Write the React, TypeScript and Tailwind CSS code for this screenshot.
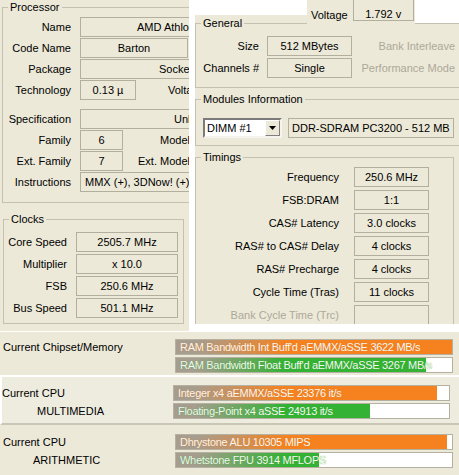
import type { ReactNode } from 'react'

const Group = ({ title, className = '', children }: { title: string; className?: string; children: ReactNode }) => (
  <fieldset className={`min-w-0 border border-[#c4c1b1] ${className}`}>
    <legend className="ml-[5px] px-[2px] leading-[13px]">{title}</legend>
    {children}
  </fieldset>
)

const Field = ({ className = '', children }: { className?: string; children?: ReactNode }) => (
  <div className={`h-[20px] shrink-0 border border-[#b2af9f] flex items-center whitespace-nowrap overflow-hidden ${className}`}>
    {children}
  </div>
)

const Row = ({ label, lw, dim = false, children }: { label: string; lw: string; dim?: boolean; children?: ReactNode }) => (
  <div className="flex items-center h-[20px] whitespace-nowrap">
    <span className={`${lw} shrink-0 text-right ${dim ? 'text-[#aca899]' : ''}`}>{label}</span>
    {children}
  </div>
)

const clocks = [
  ['Core Speed', '2505.7 MHz'],
  ['Multiplier', 'x 10.0'],
  ['FSB', '250.6 MHz'],
  ['Bus Speed', '501.1 MHz'],
]

const timings: [string, string, boolean][] = [
  ['Frequency', '250.6 MHz', false],
  ['FSB:DRAM', '1:1', false],
  ['CAS# Latency', '3.0 clocks', false],
  ['RAS# to CAS# Delay', '4 clocks', false],
  ['RAS# Precharge', '4 clocks', false],
  ['Cycle Time (Tras)', '11 clocks', false],
  ['Bank Cycle Time (Trc)', '', true],
]

const orange = 'bg-[linear-gradient(90deg,#a69d8f_20px,#f5821f_110px)]'
const green = 'bg-[linear-gradient(90deg,#a69d8f_20px,#33b233_110px)]'

const Bar = ({ text, fill, kind }: { text: string; fill: number; kind: 'orange' | 'green' }) => (
  <div className="relative h-[16px] border border-[#b4b1a3] bg-white overflow-hidden">
    <div className={`h-full ${kind === 'orange' ? orange : green}`} style={{ width: fill }} />
    <span
      className={`absolute left-[4px] top-0 leading-[14px] tracking-[-0.3px] whitespace-nowrap text-[#f6f6f2] ${
        kind === 'green' ? '[text-shadow:0_0_1px_#2ea82e]' : '[text-shadow:0_0_1px_#e07a20]'
      }`}
    >
      {text}
    </span>
  </div>
)

export default function App() {
  return (
    <div className="w-[459px] h-[475px] overflow-hidden bg-white text-[11px] text-black font-['Liberation_Sans',Arial,sans-serif]">
      {/* CPU-Z windows */}
      <div className="flex items-start h-[331px]">
        {/* CPU tab */}
        <div className="w-[189px] h-[331px] shrink-0 bg-[#ece9d8] overflow-hidden pl-[2px] pt-[1px]">
          <Group title="Processor" className="w-[300px] pt-[3px] pb-[10px]">
            <div className="flex flex-col gap-[1px]">
              <Row label="Name" lw="w-[68px]">
                <Field className="ml-[9px] w-[220px] pl-[56px]">AMD Athlon(tm) XP 3200+</Field>
              </Row>
              <Row label="Code Name" lw="w-[68px]">
                <Field className="ml-[9px] w-[108px] justify-center">Barton</Field>
              </Row>
              <Row label="Package" lw="w-[68px]">
                <Field className="ml-[9px] w-[220px] pl-[78px]">Socket A (462)</Field>
              </Row>
              <Row label="Technology" lw="w-[68px]">
                <Field className="ml-[9px] w-[56px] justify-center">0.13 µ</Field>
                <span className="ml-[32px]">Voltage</span>
              </Row>
              <div className="h-[7px]" />
              <Row label="Specification" lw="w-[68px]">
                <Field className="ml-[9px] w-[220px] pl-[93px]">Unknown</Field>
              </Row>
              <Row label="Family" lw="w-[68px]">
                <Field className="ml-[9px] w-[43px] justify-center">6</Field>
                <span className="ml-[37px]">Model</span>
              </Row>
              <Row label="Ext. Family" lw="w-[68px]">
                <Field className="ml-[9px] w-[43px] justify-center">7</Field>
                <span className="ml-[15px]">Ext. Model</span>
              </Row>
              <Row label="Instructions" lw="w-[68px]">
                <Field className="ml-[9px] w-[220px] pl-[4px]">MMX (+), 3DNow! (+), SSE</Field>
              </Row>
            </div>
          </Group>

          <Group title="Clocks" className="mt-[10px] ml-[1px] w-[181px] pt-[6px] pb-[5px]">
            <div className="flex flex-col gap-[2px]">
              {clocks.map(([l, v]) => (
                <Row key={l} label={l} lw="w-[63px]">
                  <Field className="ml-[9px] w-[102px] justify-center">{v}</Field>
                </Row>
              ))}
            </div>
          </Group>
        </div>

        {/* Memory tab */}
        <div className="relative ml-[6px] w-[264px] h-[324px] shrink-0 bg-[#ece9d8] overflow-hidden">
          <div className="flex h-[24px]">
            <div className="w-[112px] h-[15px] bg-white" />
            <div className="relative z-10 w-[108px] h-[24px] bg-[#ece9d8] flex items-start pl-[4px] whitespace-nowrap">
              <span className="pt-[9px] leading-[13px]">Voltage</span>
              <div className="ml-[5px] w-[61px] h-[21px] border border-t-0 border-[#b2af9f] flex justify-center pt-[8px] leading-[13px]">
                1.792 v
              </div>
            </div>
            <div className="flex-1 h-[23px] bg-white" />
          </div>

          <Group title="General" className="-mt-[7px] w-[300px] pt-[6px] pb-[9px]">
            <div className="flex flex-col gap-[2px]">
              <Row label="Size" lw="w-[63px]">
                <Field className="ml-[8px] w-[85px] justify-center">512 MBytes</Field>
                <span className="w-[103px] text-right text-[#aca899]">Bank Interleave</span>
              </Row>
              <Row label="Channels #" lw="w-[63px]">
                <Field className="ml-[8px] w-[85px] justify-center">Single</Field>
                <span className="w-[103px] text-right text-[#aca899]">Performance Mode</span>
              </Row>
            </div>
          </Group>

          <Group title="Modules Information" className="mt-[5px] w-[300px] pt-[12px] pb-[7px]">
            <div className="flex items-center">
              <div className="ml-[7px] w-[79px] h-[20px] flex border-2 border-t-[#7b7b7b] border-l-[#7b7b7b] border-b-[#f4f3ee] border-r-[#f4f3ee] bg-white">
                <span className="flex-1 pl-[2px] leading-[16px]">DIMM #1</span>
                <span className="w-[15px] h-full bg-[#ece9d8] border border-t-white border-l-white border-b-[#808080] border-r-[#808080] flex items-center justify-center">
                  <svg width="7" height="4" viewBox="0 0 7 4">
                    <path d="M0 0h7L3.5 4z" fill="#000" />
                  </svg>
                </span>
              </div>
              <Field className="ml-[6px] w-[166px] pl-[3px]">DDR-SDRAM PC3200 - 512 MB</Field>
            </div>
          </Group>

          <Group title="Timings" className="mt-[5px] w-[259px] pt-[3px] pb-[10px]">
            <div className="flex flex-col gap-[3px]">
              {timings.map(([l, v, dim]) => (
                <Row key={l} label={l} lw="w-[143px]" dim={dim}>
                  <Field className="ml-[15px] w-[75px] justify-center">{v}</Field>
                </Row>
              ))}
            </div>
          </Group>
        </div>
      </div>

      {/* Sandra benchmark bars */}
      <div className="mt-[1px] h-[43px] bg-[#ece9d8] flex pt-[7px]">
        <div className="w-[175px] pl-[3px] leading-[16px]">Current Chipset/Memory</div>
        <div className="w-[278px] flex flex-col gap-[2px]">
          <Bar text="RAM Bandwidth Int Buff'd aEMMX/aSSE 3622 MB/s" fill={277} kind="orange" />
          <Bar text="RAM Bandwidth Float Buff'd aEMMX/aSSE 3267 MB/s" fill={250} kind="green" />
        </div>
      </div>

      <div className="h-[50px] bg-[#eeecdf] border-t-2 border-l-2 border-t-white border-l-white border-b-2 border-b-[#c9c6b6] flex pt-[8px]">
        <div className="w-[171px] flex flex-col gap-[2px] leading-[16px]">
          <span>Current CPU</span>
          <span className="pl-[35px]">MULTIMEDIA</span>
        </div>
        <div className="w-[277px] flex flex-col gap-[2px]">
          <Bar text="Integer x4 aEMMX/aSSE 23376 it/s" fill={263} kind="orange" />
          <Bar text="Floating-Point x4 aSSE 24913 it/s" fill={196} kind="green" />
        </div>
      </div>

      <div className="h-[50px] bg-[#ece9d8] flex pt-[9px]">
        <div className="w-[175px] pl-[3px] flex flex-col gap-[2px] leading-[16px]">
          <span>Current CPU</span>
          <span className="pl-[30px]">ARITHMETIC</span>
        </div>
        <div className="w-[278px] flex flex-col gap-[2px]">
          <Bar text="Dhrystone ALU 10305 MIPS" fill={271} kind="orange" />
          <Bar text="Whetstone FPU 3914 MFLOPS" fill={143} kind="green" />
        </div>
      </div>
    </div>
  )
}
